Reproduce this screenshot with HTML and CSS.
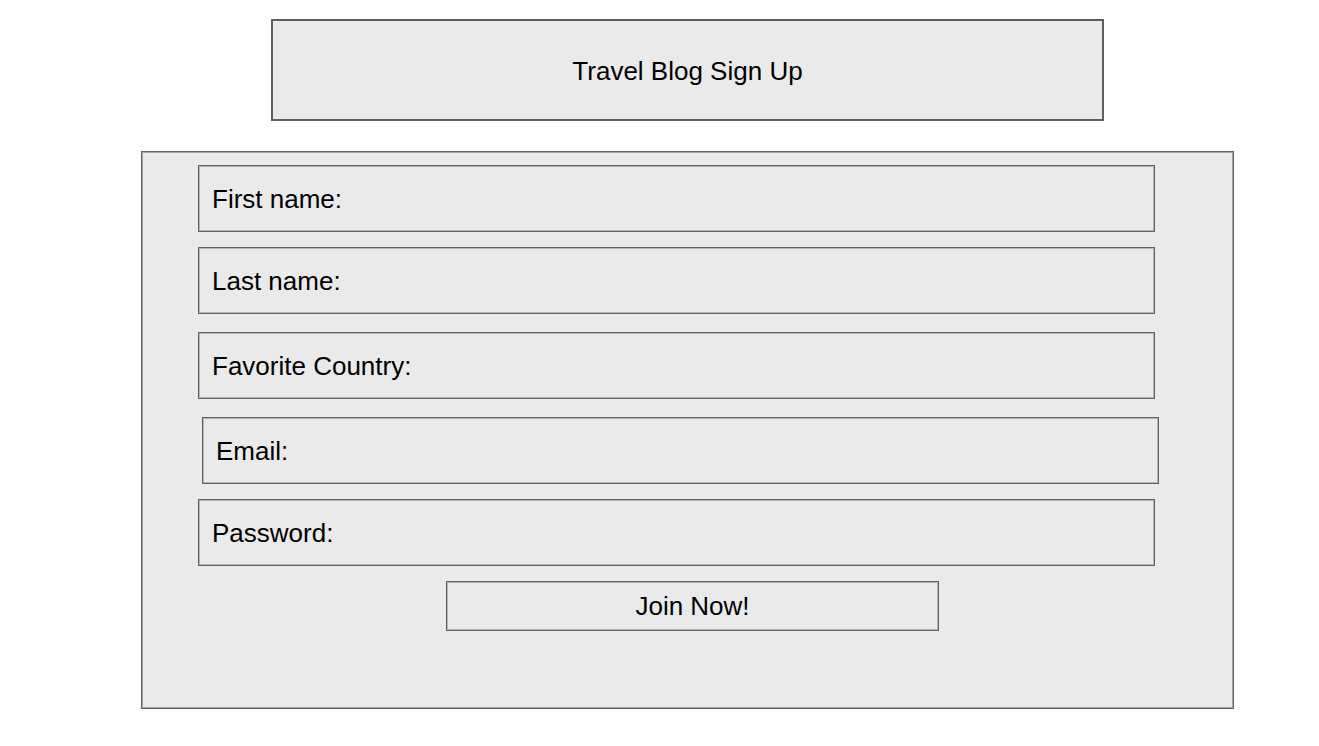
FILE: index.html
```html
<!DOCTYPE html>
<html>
<head>
<meta charset="utf-8">
<link rel="stylesheet" href="styles.css">
</head>
<body>
<header class="title-box">Travel Blog Sign Up</header>
<form class="signup">
  <div class="field">First name:</div>
  <div class="field gap-lg">Last name:</div>
  <div class="field gap-lg">Favorite Country:</div>
  <div class="field field-shift">Email:</div>
  <div class="field">Password:</div>
  <div class="join">Join Now!</div>
</form>
</body>
</html>
```
FILE: styles.css
```css
html, body {
  margin: 0;
  padding: 0;
  background: #ffffff;
}
body {
  font-family: "Liberation Sans", Arial, sans-serif;
  color: #000;
  padding-top: 19px;
}
.title-box {
  box-sizing: border-box;
  margin-left: 271px;
  width: 833px;
  height: 102px;
  background: #eaeaea;
  border: 2px solid #5e5e5e;
  display: flex;
  align-items: center;
  justify-content: center;
  font-size: 26px;
  padding-top: 2px;
}
.signup {
  box-sizing: border-box;
  margin: 30px 0 0 141px;
  width: 1093px;
  height: 558px;
  background: #eaeaea;
  border: 1px solid #616161;
  box-shadow: inset 0 0 0 1px #a8a8a8;
  padding: 13px 0 0 56px;
  display: flex;
  flex-direction: column;
  align-items: flex-start;
}
.field {
  box-sizing: border-box;
  width: 957px;
  height: 67px;
  border: 1px solid #616161;
  box-shadow: inset 0 0 0 1px #b4b4b4;
  display: flex;
  align-items: center;
  padding: 2px 0 0 13px;
  font-size: 26px;
  margin-bottom: 15px;
}
.gap-lg {
  margin-bottom: 18px;
}
.field-shift {
  margin-left: 4px;
}
.join {
  box-sizing: border-box;
  margin-left: 248px;
  width: 493px;
  height: 50px;
  border: 1px solid #616161;
  box-shadow: inset 0 0 0 1px #b4b4b4;
  display: flex;
  align-items: center;
  justify-content: center;
  font-size: 26px;
  padding-top: 1px;
}
```
